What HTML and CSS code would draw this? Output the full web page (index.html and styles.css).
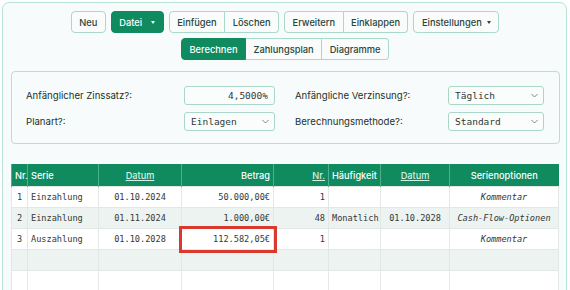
FILE: index.html
```html
<!DOCTYPE html>
<html lang="de">
<head>
  <meta charset="UTF-8">
  <title>Sparplan</title>
  <link rel="stylesheet" href="styles.css">
</head>
<body>
  <div class="frame">
    <div class="toolbar">
      <div class="btn-row">
        <button class="btn">Neu</button>
        <button class="btn btn-green">Datei <span class="caret"></span></button>
        <div class="btn-group">
          <button class="btn">Einfügen</button>
          <button class="btn">Löschen</button>
        </div>
        <div class="btn-group">
          <button class="btn">Erweitern</button>
          <button class="btn">Einklappen</button>
        </div>
        <button class="btn">Einstellungen <span class="caret dark"></span></button>
      </div>
      <div class="btn-row">
        <div class="btn-group">
          <button class="btn btn-green">Berechnen</button>
          <button class="btn">Zahlungsplan</button>
          <button class="btn">Diagramme</button>
        </div>
      </div>
    </div>

    <div class="settings">
      <div class="field">
        <label>Anfänglicher Zinssatz?:</label>
        <input class="inp small" type="text" value="4,5000%">
      </div>
      <div class="field">
        <label>Anfängliche Verzinsung?:</label>
        <div class="select-wrap wide">
          <select class="inp"><option>Täglich</option></select>
          <svg class="chev" width="7" height="5" viewBox="0 0 7 5"><path d="M0.5 1 L3.5 4 L6.5 1" fill="none" stroke="#6b7f78" stroke-width="0.9"/></svg>
        </div>
      </div>
      <div class="field">
        <label>Planart?:</label>
        <div class="select-wrap small">
          <select class="inp"><option>Einlagen</option></select>
          <svg class="chev" width="7" height="5" viewBox="0 0 7 5"><path d="M0.5 1 L3.5 4 L6.5 1" fill="none" stroke="#6b7f78" stroke-width="0.9"/></svg>
        </div>
      </div>
      <div class="field">
        <label>Berechnungsmethode?:</label>
        <div class="select-wrap wide">
          <select class="inp"><option>Standard</option></select>
          <svg class="chev" width="7" height="5" viewBox="0 0 7 5"><path d="M0.5 1 L3.5 4 L6.5 1" fill="none" stroke="#6b7f78" stroke-width="0.9"/></svg>
        </div>
      </div>
    </div>

    <table class="grid">
      <colgroup>
        <col style="width:16px"><col style="width:71px"><col style="width:83px"><col style="width:92px">
        <col style="width:55px"><col style="width:52px"><col style="width:69px"><col style="width:109px">
      </colgroup>
      <thead>
        <tr>
          <th class="l">Nr.</th>
          <th class="l">Serie</th>
          <th class="c"><u>Datum</u></th>
          <th class="r">Betrag</th>
          <th class="r"><u>Nr.</u></th>
          <th class="l">Häufigkeit</th>
          <th class="c"><u>Datum</u></th>
          <th class="c">Serienoptionen</th>
        </tr>
      </thead>
      <tbody>
        <tr>
          <td class="c">1</td><td>Einzahlung</td><td class="c">01.10.2024</td><td class="r">50.000,00€</td>
          <td class="r">1</td><td></td><td></td><td class="c opt">Kommentar</td>
        </tr>
        <tr class="alt">
          <td class="c">2</td><td>Einzahlung</td><td class="c">01.11.2024</td><td class="r">1.000,00€</td>
          <td class="r">48</td><td>Monatlich</td><td class="c">01.10.2028</td><td class="c opt">Cash-Flow-Optionen</td>
        </tr>
        <tr>
          <td class="c">3</td><td>Auszahlung</td><td class="c">01.10.2028</td><td class="r mark">112.582,05€</td>
          <td class="r">1</td><td></td><td></td><td class="c opt">Kommentar</td>
        </tr>
        <tr class="alt">
          <td></td><td></td><td></td><td></td><td></td><td></td><td></td><td></td>
        </tr>
        <tr>
          <td></td><td></td><td></td><td></td><td></td><td></td><td></td><td></td>
        </tr>
      </tbody>
    </table>
  </div>
</body>
</html>
```

FILE: styles.css
```css
body {
  margin: 0;
  background: #ffffff;
  font-family: Inter, "Noto Sans", sans-serif;
  color: #24362f;
}
.frame {
  margin: 2px 3px 0 2px;
  height: 300px;
  border: 1.5px solid #b8e2d5;
  border-radius: 7px;
  background: #f7fbfb;
  padding: 8px 7px 0 8px;
  box-sizing: border-box;
}
.toolbar {
  display: flex;
  flex-direction: column;
  align-items: center;
  gap: 5px;
  margin-top: 0;
}
.btn-row {
  display: flex;
  gap: 5px;
}
.btn-group {
  display: flex;
}
.btn {
  font-family: Inter, "Noto Sans", sans-serif;
  font-size: 9.3px;
  font-weight: 500;
  height: 22px;
  padding: 0 7.5px;
  background: #f9fcfb;
  color: #2a453b;
  border: 1px solid #a9d9c9;
  border-radius: 4px;
  display: flex;
  align-items: center;
  gap: 5px;
}
.btn-group .btn {
  border-radius: 0;
}
.btn-group .btn + .btn {
  border-left: none;
}
.btn-group .btn:first-child {
  border-radius: 4px 0 0 4px;
}
.btn-group .btn:last-child {
  border-radius: 0 4px 4px 0;
}
.btn-green {
  background: #108a5f;
  border-color: #108a5f;
  color: #ffffff;
}
.caret {
  display: inline-block;
  width: 0;
  height: 0;
  border-left: 2.5px solid transparent;
  border-right: 2.5px solid transparent;
  border-top: 3px solid #ffffff;
  margin-left: 4px;
}
.caret.dark {
  border-top-color: #2a453b;
  margin-left: 0;
}
.settings {
  margin-top: 11px;
  border: 1px solid #b5e0d2;
  border-radius: 4px;
  background: #f8fbfb;
  display: grid;
  grid-template-columns: 249px 249px;
  column-gap: 20px;
  row-gap: 7px;
  padding: 14px 15px 12px 14px;
  width: 549px;
  box-sizing: border-box;
}
.field {
  display: flex;
  justify-content: space-between;
  align-items: center;
  font-size: 9.6px;
  color: #22302b;
}
.inp {
  font-family: "DejaVu Sans Mono", monospace;
  font-size: 9.5px;
  color: #2e3a36;
  height: 19px;
  border: 1px solid #a9d8c8;
  border-radius: 3px;
  background: #fbfdfc;
  box-sizing: border-box;
  padding: 0 6px;
}
input.small {
  width: 91px;
  text-align: right;
}
.select-wrap {
  position: relative;
}
.select-wrap.small {
  width: 91px;
}
.select-wrap.wide {
  width: 96px;
}
.select-wrap select {
  width: 100%;
  appearance: none;
  -webkit-appearance: none;
}
.chev {
  position: absolute;
  right: 6px;
  top: 7px;
}
.grid {
  margin-top: 20px;
  border-collapse: collapse;
  table-layout: fixed;
  width: 547px;
  font-family: "DejaVu Sans Mono", monospace;
  font-size: 8.6px;
  color: #333836;
  border-left: 1px solid #b5e0d2;
}
.grid th {
  background: #108a5f;
  color: #ffffff;
  font-family: Inter, "Noto Sans", sans-serif;
  font-size: 9.2px;
  font-weight: 500;
  height: 22px;
  padding: 0 3px;
  border-left: 1px solid #4bb08b;
  white-space: nowrap;
}
.grid th u {
  color: #d4f1e5;
}
.grid td {
  height: 20px;
  padding: 0 3px;
  border: 1px solid #e1e8e5;
  background: #ffffff;
  white-space: nowrap;
  overflow: visible;
}
.grid tr.alt td {
  background: #edf3f1;
}
.grid .l { text-align: left; }
.grid .c { text-align: center; }
.grid .r { text-align: right; }
.grid .opt {
  font-style: italic;
}
.grid td.mark {
  outline: 3px solid #d83a30;
  outline-offset: 0;
}
```
